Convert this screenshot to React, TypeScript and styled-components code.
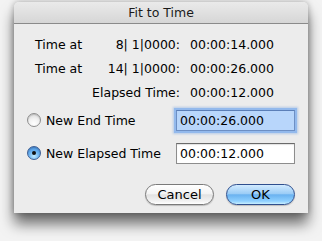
import React from "react";
import styled, { createGlobalStyle } from "styled-components";

const GlobalStyle = createGlobalStyle`
  html, body {
    margin: 0;
    padding: 0;
    background: #f3f3f3;
    font-family: "DejaVu Sans", "Liberation Sans", sans-serif;
    font-size: 12.5px;
    color: #000;
  }
  #root {
    width: 322px;
    height: 241px;
    overflow: hidden;
  }
`;

const Window = styled.div`
  margin: 2px 0 0 14px;
  width: 294px;
  height: 211px;
  background: #ececec;
  border-radius: 5px 5px 0 0;
  box-shadow: 0 11px 14px rgba(0, 0, 0, 0.55), 0 0 6px rgba(0, 0, 0, 0.3);
  display: flex;
  flex-direction: column;
`;

const TitleBar = styled.div`
  height: 21px;
  border-bottom: 1px solid #8a8a8a;
  border-radius: 5px 5px 0 0;
  background: linear-gradient(#eaeaea, #d6d6d6);
  display: flex;
  align-items: center;
  justify-content: center;
  color: #1a1a1a;
`;

const Content = styled.div`
  flex: 1;
  display: flex;
  flex-direction: column;
  padding: 8px 13px 8px 0;
`;

const InfoGrid = styled.div`
  display: grid;
  grid-template-columns: 60px 85px 1fr;
  grid-auto-rows: 24px;
  align-items: center;
  padding-left: 21px;
`;

const Cell = styled.div<{ $align?: "left" | "right"; $span?: boolean }>`
  white-space: pre;
  text-align: ${(p) => (p.$align === "right" ? "right" : "left")};
  grid-column: ${(p) => (p.$span ? "1 / 3" : "auto")};
`;

const Value = styled.div`
  padding-left: 10px;
  white-space: pre;
`;

const OptionRow = styled.div<{ $top: number }>`
  display: flex;
  align-items: center;
  height: 26px;
  margin-top: ${(p) => p.$top}px;
  padding-left: 13px;
`;

const Radio = styled.span<{ $checked?: boolean }>`
  position: relative;
  box-sizing: border-box;
  width: 14px;
  height: 14px;
  border-radius: 50%;
  border: 1px solid ${(p) => (p.$checked ? "#3d5e94" : "#8e8e8e")};
  background: ${(p) =>
    p.$checked
      ? "radial-gradient(circle at 50% 75%, #c4ecff 0%, #6cb3f0 45%, #3a80d2 100%)"
      : "radial-gradient(circle at 50% 80%, #ffffff 0%, #f1f1f1 45%, #d0d0d0 100%)"};
  box-shadow: inset 0 1px 1px rgba(0, 0, 0, 0.15);
  flex: none;

  &::after {
    content: "";
    display: ${(p) => (p.$checked ? "block" : "none")};
    position: absolute;
    left: 4px;
    top: 4px;
    width: 4px;
    height: 4px;
    border-radius: 50%;
    background: #111;
  }
`;

const OptionLabel = styled.span`
  margin-left: 5px;
`;

const TimeField = styled.div<{ $focused?: boolean }>`
  margin-left: auto;
  box-sizing: border-box;
  width: 119px;
  height: 21px;
  padding-left: 3px;
  border: 1px solid ${(p) => (p.$focused ? "#6d8fc4" : "#8d8d8d")};
  border-top-color: ${(p) => (p.$focused ? "#5b7fb8" : "#6a6a6a")};
  background: ${(p) => (p.$focused ? "#b8d6fb" : "#fff")};
  box-shadow: ${(p) =>
    p.$focused
      ? "0 0 0 2px #93b9ec, 0 0 2px 3px rgba(120, 165, 225, 0.45)"
      : "inset 0 1px 1px rgba(0, 0, 0, 0.12)"};
  display: flex;
  align-items: center;
`;

const ButtonRow = styled.div`
  margin-top: auto;
  display: flex;
  justify-content: flex-end;
  gap: 12px;
`;

const Button = styled.button<{ $primary?: boolean }>`
  width: 69px;
  height: 21px;
  border-radius: 11px;
  font: inherit;
  font-size: 13px;
  color: #000;
  padding: 0;
  border: 1px solid ${(p) => (p.$primary ? "#2f4f8e" : "#7a7a7a")};
  background: ${(p) =>
    p.$primary
      ? "linear-gradient(#d2ebff 0%, #9ccdf6 45%, #6ab2f0 52%, #8fd0ff 85%, #c8efff 100%)"
      : "linear-gradient(#ffffff 0%, #f4f4f4 45%, #e2e2e2 52%, #f2f2f2 85%, #ffffff 100%)"};
  box-shadow: 0 1px 1px rgba(0, 0, 0, 0.2);
  display: flex;
  align-items: center;
  justify-content: center;
`;

const rows = [
  { label: "Time at", pos: "8| 1|0000:", value: "00:00:14.000" },
  { label: "Time at", pos: "14| 1|0000:", value: "00:00:26.000" },
];

export default function App() {
  return (
    <>
      <GlobalStyle />
      <Window>
        <TitleBar>Fit to Time</TitleBar>
        <Content>
          <InfoGrid>
            {rows.map((r, i) => (
              <React.Fragment key={i}>
                <Cell>{r.label}</Cell>
                <Cell $align="right">{r.pos}</Cell>
                <Value>{r.value}</Value>
              </React.Fragment>
            ))}
            <Cell $align="right" $span>
              Elapsed Time:
            </Cell>
            <Value>00:00:12.000</Value>
          </InfoGrid>
          <OptionRow $top={3}>
            <Radio />
            <OptionLabel>New End Time</OptionLabel>
            <TimeField $focused>00:00:26.000</TimeField>
          </OptionRow>
          <OptionRow $top={7}>
            <Radio $checked />
            <OptionLabel>New Elapsed Time</OptionLabel>
            <TimeField>00:00:12.000</TimeField>
          </OptionRow>
          <ButtonRow>
            <Button>Cancel</Button>
            <Button $primary>OK</Button>
          </ButtonRow>
        </Content>
      </Window>
    </>
  );
}
